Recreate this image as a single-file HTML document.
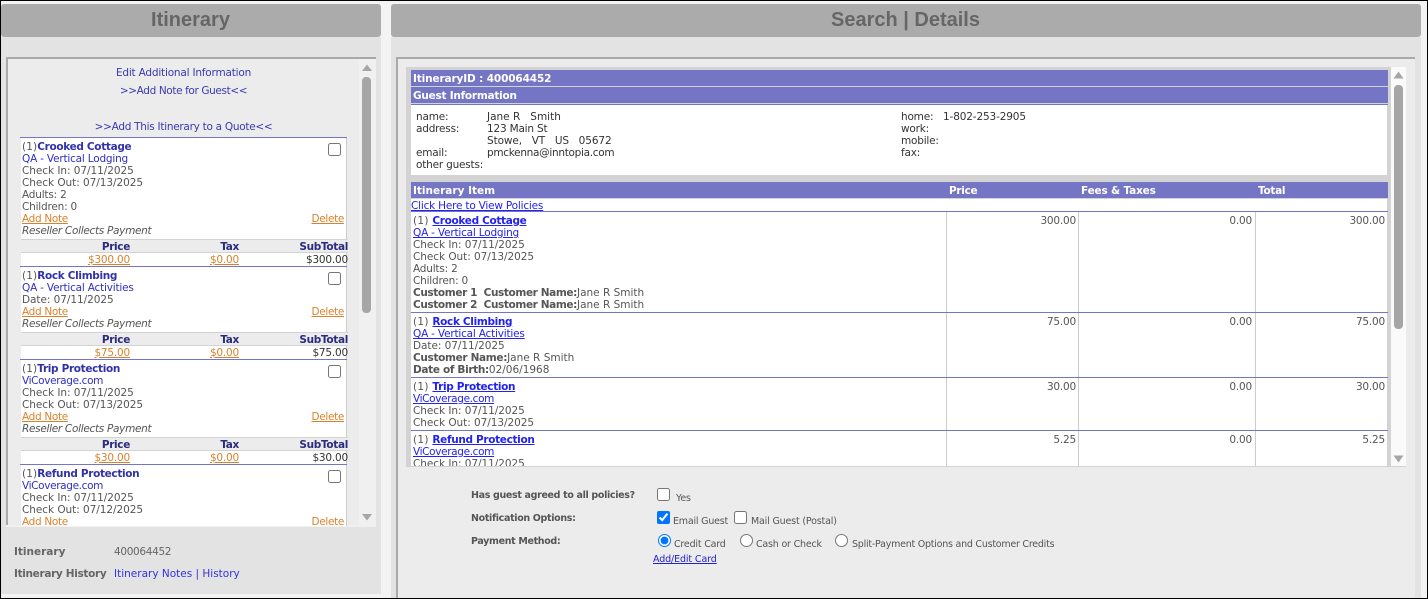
<!DOCTYPE html>
<html><head><meta charset="utf-8"><style>
html,body{margin:0;padding:0;width:1428px;height:599px;overflow:hidden;background:#f3f3f3}
body{position:relative;font:10.5px/12px "DejaVu Sans","Liberation Sans",sans-serif;color:#555;letter-spacing:-.2px}
div,a,span.t{position:absolute}
.t{white-space:nowrap;height:12px;line-height:12px;margin-top:1px}
a{color:inherit}
.hd{background:#ababab;border-radius:3px;height:33px;top:4px;text-align:center;font:bold 20px/32px "Liberation Sans",sans-serif;color:#666;letter-spacing:0;text-indent:-1px}
.nav{color:#3a3ab0}
.ti{color:#3232a8;font-weight:bold}
.lk{color:#2f2fc0}
.or{color:#d9822b;text-decoration:underline}
.it{font-style:italic;letter-spacing:-.3px}
.gr{background:#ececec;border-top:1px solid #d3d3d3;border-bottom:1px solid #d3d3d3;height:12px;left:21px;width:327px}
.th{color:#2b2b80;font-weight:bold;text-align:right}
.pl{background:#7575c5;height:1px}
.bar{background:#7575c5;height:16px;left:411px;width:977px}
.w{color:#fff;font-weight:bold}
.k{color:#333}
b,.b{font-weight:bold}
b,.b,.ti,.th{letter-spacing:-.33px}
.d{letter-spacing:-.05px}
.q{letter-spacing:.13px}
.q2{letter-spacing:.3px}
.bl{color:#2222ee;text-decoration:underline}
.r{text-align:right;width:60px}
.cl{background:#ccc;width:1px;top:212px;height:254px}
.sm{font-size:9.5px;margin-top:2px}
input{position:absolute;margin:0;width:13px;height:13px}
</style></head><body>
<div style="left:0;top:0;width:1428px;height:1px;background:#000"></div>
<div style="left:0;top:598px;width:1428px;height:1px;background:#000"></div>
<div style="left:0;top:0;width:1px;height:599px;background:#000"></div>
<div style="left:1427px;top:0;width:1px;height:599px;background:#000"></div>

<!-- LEFT -->
<div style="left:1px;top:37px;width:380px;height:557px;background:#e3e3e3"></div>
<div class="hd" style="left:1px;width:380px">Itinerary</div>
<div style="left:6px;top:57px;width:370px;height:470px;background:#a9a9a9"></div>
<div style="left:8px;top:59px;width:368px;height:468px;background:#ececec"></div>
<div style="left:6px;top:525px;width:370px;height:2px;background:#f0f0f0"></div>
<div style="left:359px;top:59px;width:17px;height:466px;background:#f0f0f0"></div>
<div style="left:362px;top:77px;width:9px;height:236px;background:#a6a6a6;border-radius:4px"></div>
<svg style="position:absolute;left:361px;top:64px" width="12" height="8"><path d="M6 0.5L11 7H1z" fill="#a6a6a6"/></svg>
<svg style="position:absolute;left:361px;top:513px" width="12" height="8"><path d="M1 1H11L6 7.5z" fill="#a6a6a6"/></svg>

<span class="t nav" style="left:8px;width:351px;text-align:center;top:66px">Edit Additional Information</span>
<span class="t nav" style="left:8px;width:351px;text-align:center;top:84px;letter-spacing:-.38px">&gt;&gt;Add Note for Guest&lt;&lt;</span>
<span class="t nav" style="left:8px;width:351px;text-align:center;top:120px;letter-spacing:-.28px">&gt;&gt;Add This Itinerary to a Quote&lt;&lt;</span>

<div style="left:20px;top:137px;width:327px;height:389px;overflow:hidden;background:#fff"></div>
<div style="left:346px;top:138px;width:1px;height:388px;background:#ccc"></div>
<div style="left:20px;top:138px;width:1px;height:388px;background:#ececec"></div>
<div class="pl" style="left:20px;top:137px;width:327px"></div>

<span class="t q" style="left:22px;top:140px">(1)<span class="ti">Crooked Cottage</span></span>
<input type="checkbox" style="left:328px;top:143px">
<span class="t lk" style="left:22px;top:152px">QA - Vertical Lodging</span>
<span class="t d" style="left:22px;top:164px">Check In: 07/11/2025</span>
<span class="t d" style="left:22px;top:176px">Check Out: 07/13/2025</span>
<span class="t" style="left:22px;top:188px">Adults: 2</span>
<span class="t" style="left:22px;top:200px">Children: 0</span>
<span class="t or" style="left:22px;top:212px;letter-spacing:-.33px">Add Note</span>
<span class="t or" style="right:1084px;top:212px;letter-spacing:-.33px">Delete</span>
<span class="t it" style="left:22px;top:224px">Reseller Collects Payment</span>
<div class="gr" style="top:239px"></div>
<span class="t th" style="right:1298px;top:240px">Price</span>
<span class="t th" style="right:1189px;top:240px">Tax</span>
<span class="t th" style="right:1080px;top:240px">SubTotal</span>
<span class="t or" style="right:1298px;top:253px">$300.00</span>
<span class="t or" style="right:1189px;top:253px">$0.00</span>
<span class="t k" style="right:1080px;top:253px">$300.00</span>
<div class="pl" style="left:20px;top:266px;width:327px"></div>

<span class="t q" style="left:22px;top:269px">(1)<span class="ti">Rock Climbing</span></span>
<input type="checkbox" style="left:328px;top:272px">
<span class="t lk" style="left:22px;top:281px">QA - Vertical Activities</span>
<span class="t d" style="left:22px;top:293px">Date: 07/11/2025</span>
<span class="t or" style="left:22px;top:305px;letter-spacing:-.33px">Add Note</span>
<span class="t or" style="right:1084px;top:305px;letter-spacing:-.33px">Delete</span>
<span class="t it" style="left:22px;top:317px">Reseller Collects Payment</span>
<div class="gr" style="top:332px"></div>
<span class="t th" style="right:1298px;top:333px">Price</span>
<span class="t th" style="right:1189px;top:333px">Tax</span>
<span class="t th" style="right:1080px;top:333px">SubTotal</span>
<span class="t or" style="right:1298px;top:346px">$75.00</span>
<span class="t or" style="right:1189px;top:346px">$0.00</span>
<span class="t k" style="right:1080px;top:346px">$75.00</span>
<div class="pl" style="left:20px;top:359px;width:327px"></div>

<span class="t q" style="left:22px;top:362px">(1)<span class="ti">Trip Protection</span></span>
<input type="checkbox" style="left:328px;top:365px">
<span class="t lk" style="left:22px;top:374px;letter-spacing:-.35px">ViCoverage.com</span>
<span class="t d" style="left:22px;top:386px">Check In: 07/11/2025</span>
<span class="t d" style="left:22px;top:398px">Check Out: 07/13/2025</span>
<span class="t or" style="left:22px;top:410px;letter-spacing:-.33px">Add Note</span>
<span class="t or" style="right:1084px;top:410px;letter-spacing:-.33px">Delete</span>
<span class="t it" style="left:22px;top:422px">Reseller Collects Payment</span>
<div class="gr" style="top:437px"></div>
<span class="t th" style="right:1298px;top:438px">Price</span>
<span class="t th" style="right:1189px;top:438px">Tax</span>
<span class="t th" style="right:1080px;top:438px">SubTotal</span>
<span class="t or" style="right:1298px;top:451px">$30.00</span>
<span class="t or" style="right:1189px;top:451px">$0.00</span>
<span class="t k" style="right:1080px;top:451px">$30.00</span>
<div class="pl" style="left:20px;top:464px;width:327px"></div>

<span class="t q" style="left:22px;top:467px">(1)<span class="ti">Refund Protection</span></span>
<input type="checkbox" style="left:328px;top:470px">
<span class="t lk" style="left:22px;top:479px;letter-spacing:-.35px">ViCoverage.com</span>
<span class="t d" style="left:22px;top:491px">Check In: 07/11/2025</span>
<span class="t d" style="left:22px;top:503px">Check Out: 07/12/2025</span>
<span class="t" style="left:22px;top:515px;color:#d9822b;letter-spacing:-.33px">Add Note</span>
<span class="t" style="right:1084px;top:515px;color:#d9822b;letter-spacing:-.33px">Delete</span>

<span class="t b" style="left:14px;top:545px;color:#666;letter-spacing:0">Itinerary</span>
<span class="t" style="left:114px;top:545px;color:#666;letter-spacing:-.33px">400064452</span>
<span class="t b" style="left:14px;top:567px;color:#666">Itinerary History</span>
<span class="t" style="left:114px;top:567px;color:#3333dd;letter-spacing:0">Itinerary Notes | History</span>

<!-- RIGHT -->
<div style="left:391px;top:37px;width:1030px;height:561px;background:#e3e3e3"></div>
<div class="hd" style="left:391px;width:1030px">Search | Details</div>
<div style="left:396px;top:57px;width:1019px;height:541px;background:#a9a9a9"></div>
<div style="left:398px;top:59px;width:1017px;height:539px;background:#ececec"></div>
<div style="left:406px;top:67px;width:985px;height:400px;background:#d3d3d3"></div>
<div style="left:1391px;top:67px;width:15px;height:399px;background:#fafafa"></div>
<div style="left:1391px;top:466px;width:15px;height:1px;background:#d3d3d3"></div>
<div style="left:1394px;top:85px;width:9px;height:244px;background:#a6a6a6;border-radius:4px"></div>
<svg style="position:absolute;left:1393px;top:71px" width="11" height="8"><path d="M5.5 0.5L10.5 7.5H0.5z" fill="#a6a6a6"/></svg>
<svg style="position:absolute;left:1393px;top:455px" width="11" height="8"><path d="M0.5 0.5H10.5L5.5 7.5z" fill="#a6a6a6"/></svg>

<div class="bar" style="top:70px"></div>
<div class="bar" style="top:87px"></div>
<div class="pl" style="left:411px;top:104px;width:977px"></div>
<span class="t w" style="left:413px;top:72px;letter-spacing:-.13px">ItineraryID : 400064452</span>
<span class="t w" style="left:413px;top:89px;letter-spacing:-.24px">Guest Information</span>
<div style="left:411px;top:105px;width:976px;height:70px;background:#fff"></div>
<span class="t k" style="left:416px;top:110px">name:</span>
<span class="t k" style="left:416px;top:122px">address:</span>
<span class="t k" style="left:416px;top:146px">email:</span>
<span class="t k" style="left:416px;top:158px">other guests:</span>
<span class="t k" style="left:487px;top:110px;white-space:pre;letter-spacing:0">Jane R   Smith</span>
<span class="t k" style="left:487px;top:122px">123 Main St</span>
<span class="t k" style="left:487px;top:134px;white-space:pre;letter-spacing:-.1px">Stowe,   VT   US   05672</span>
<span class="t k" style="left:487px;top:146px;letter-spacing:-.3px">pmckenna@inntopia.com</span>
<span class="t k" style="left:901px;top:110px">home:</span>
<span class="t k" style="left:943px;top:110px;letter-spacing:-.14px">1-802-253-2905</span>
<span class="t k" style="left:901px;top:122px">work:</span>
<span class="t k" style="left:901px;top:134px">mobile:</span>
<span class="t k" style="left:901px;top:146px">fax:</span>

<div class="bar" style="top:182px"></div>
<span class="t w" style="left:413px;top:184px;letter-spacing:0">Itinerary Item</span>
<span class="t w" style="left:949px;top:184px;letter-spacing:-.3px">Price</span>
<span class="t w" style="left:1081px;top:184px;letter-spacing:-.17px">Fees &amp; Taxes</span>
<span class="t w" style="left:1258px;top:184px;letter-spacing:-.3px">Total</span>
<div style="left:411px;top:199px;width:976px;height:267px;background:#fff;overflow:hidden"></div>
<span class="t bl" style="left:411px;top:199px">Click Here to View Policies</span>
<div class="pl" style="left:411px;top:211px;width:977px"></div>
<div class="cl" style="left:946px"></div>
<div class="cl" style="left:1078px"></div>
<div class="cl" style="left:1255px"></div>
<div class="pl" style="left:411px;top:312px;width:977px"></div>
<div class="pl" style="left:411px;top:377px;width:977px"></div>
<div class="pl" style="left:411px;top:430px;width:977px"></div>

<span class="t q2" style="left:413px;top:214px">(1) <a class="b bl" style="position:static">Crooked Cottage</a></span>
<span class="t bl" style="left:413px;top:226px">QA - Vertical Lodging</span>
<span class="t d" style="left:413px;top:238px">Check In: 07/11/2025</span>
<span class="t d" style="left:413px;top:250px">Check Out: 07/13/2025</span>
<span class="t" style="left:413px;top:262px">Adults: 2</span>
<span class="t" style="left:413px;top:274px">Children: 0</span>
<span class="t" style="left:413px;top:286px;white-space:pre;letter-spacing:0"><b style="letter-spacing:-.38px">Customer 1  Customer Name:</b>Jane R Smith</span>
<span class="t" style="left:413px;top:298px;white-space:pre;letter-spacing:0"><b style="letter-spacing:-.38px">Customer 2  Customer Name:</b>Jane R Smith</span>
<span class="t r" style="left:1016px;top:214px">300.00</span><span class="t r" style="left:1192px;top:214px">0.00</span><span class="t r" style="left:1325px;top:214px">300.00</span>

<span class="t q2" style="left:413px;top:315px">(1) <a class="b bl" style="position:static">Rock Climbing</a></span>
<span class="t bl" style="left:413px;top:327px">QA - Vertical Activities</span>
<span class="t d" style="left:413px;top:339px">Date: 07/11/2025</span>
<span class="t" style="left:413px;top:351px;letter-spacing:0"><b>Customer Name:</b>Jane R Smith</span>
<span class="t" style="left:413px;top:363px;letter-spacing:0"><b>Date of Birth:</b>02/06/1968</span>
<span class="t r" style="left:1016px;top:315px">75.00</span><span class="t r" style="left:1192px;top:315px">0.00</span><span class="t r" style="left:1325px;top:315px">75.00</span>

<span class="t q2" style="left:413px;top:380px">(1) <a class="b bl" style="position:static">Trip Protection</a></span>
<span class="t bl" style="left:413px;top:392px;letter-spacing:-.35px">ViCoverage.com</span>
<span class="t d" style="left:413px;top:404px">Check In: 07/11/2025</span>
<span class="t d" style="left:413px;top:416px">Check Out: 07/13/2025</span>
<span class="t r" style="left:1016px;top:380px">30.00</span><span class="t r" style="left:1192px;top:380px">0.00</span><span class="t r" style="left:1325px;top:380px">30.00</span>

<span class="t q2" style="left:413px;top:433px">(1) <a class="b bl" style="position:static">Refund Protection</a></span>
<span class="t bl" style="left:413px;top:445px;letter-spacing:-.35px">ViCoverage.com</span>
<span class="t d" style="left:413px;top:457px;height:8px;overflow:hidden">Check In: 07/11/2025</span>
<span class="t r" style="left:1016px;top:433px">5.25</span><span class="t r" style="left:1192px;top:433px">0.00</span><span class="t r" style="left:1325px;top:433px">5.25</span>

<span class="t b sm" style="left:471px;top:488px">Has guest agreed to all policies?</span>
<span class="t b sm" style="left:471px;top:511px">Notification Options:</span>
<span class="t b sm" style="left:471px;top:534px">Payment Method:</span>
<input type="checkbox" style="left:657px;top:488px">
<span class="t sm" style="left:676px;top:491px">Yes</span>
<input type="checkbox" checked style="left:657px;top:511px">
<span class="t sm" style="left:673px;top:514px">Email Guest</span>
<input type="checkbox" style="left:734px;top:511px">
<span class="t sm" style="left:751px;top:514px;letter-spacing:-.17px">Mail Guest (Postal)</span>
<input type="radio" name="p" checked style="left:658px;top:534px">
<span class="t sm" style="left:674px;top:537px">Credit Card</span>
<input type="radio" name="p" style="left:740px;top:534px">
<span class="t sm" style="left:756px;top:537px">Cash or Check</span>
<input type="radio" name="p" style="left:835px;top:534px">
<span class="t sm" style="left:852px;top:537px;letter-spacing:-.24px">Split-Payment Options and Customer Credits</span>
<span class="t sm" style="left:653px;top:552px;color:#2222cc;text-decoration:underline;letter-spacing:-.12px">Add/Edit Card</span>
</body></html>
